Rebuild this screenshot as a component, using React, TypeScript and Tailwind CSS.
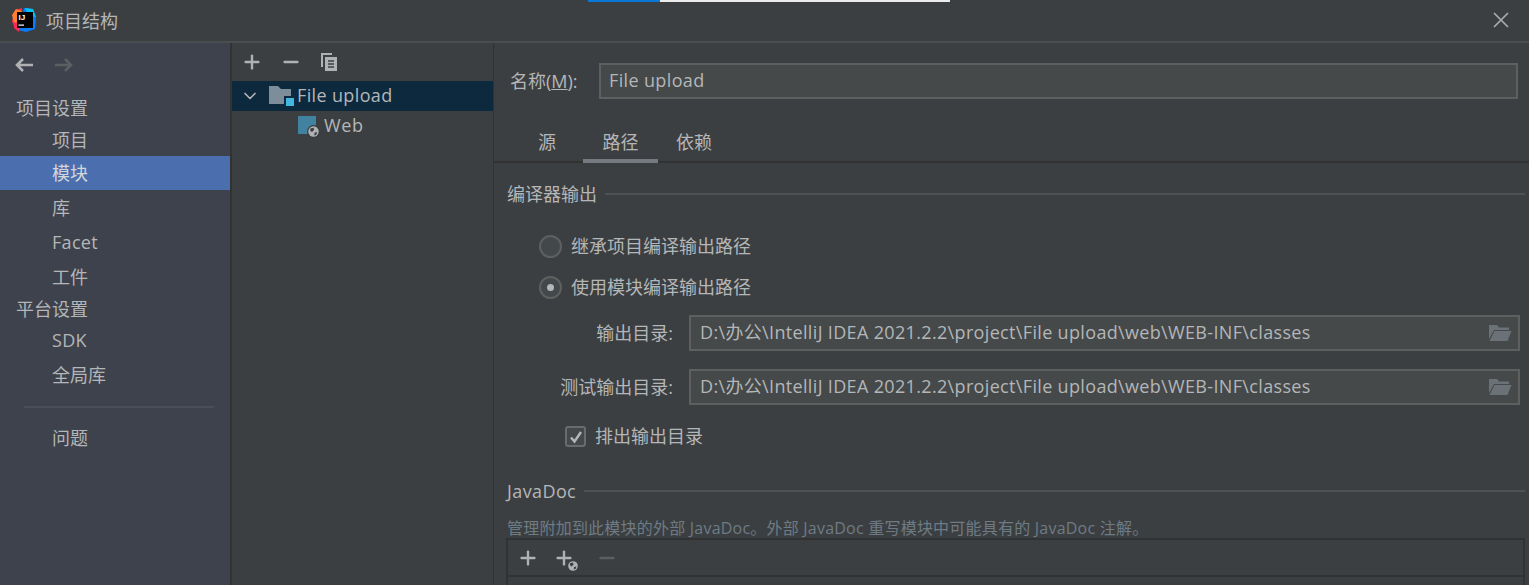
import React from 'react';
import { ChevronDown, Minus, Plus } from 'lucide-react';

const font = 'font-["Open_Sans","Noto_Sans_CJK_SC",sans-serif]';

const Globe = ({ className }: { className: string }) => (
  <svg viewBox="0 0 12 12" className={className}>
    <circle cx="6" cy="6" r="6" fill="#3c3f41" />
    <circle cx="6" cy="6" r="4.8" fill="#afb1b3" />
    <path d="M3 3.2 6 2.6 6.6 4.4 4.6 6.4 3 5.2ZM7 7 9.4 6.6 8.6 9 6.8 9.6Z" fill="#3c3f41" />
  </svg>
);

const FolderOpen = () => (
  <svg viewBox="0 0 24 18" className="h-[18px] w-6 shrink-0">
    <path d="M1 1h8l2 2.5h10V6H6L1 15Z" fill="#6b7277" />
    <path d="M6.5 7H23.5L19.5 17H1.5Z" fill="#6b7277" />
  </svg>
);

const Logo = () => (
  <svg viewBox="0 0 24 24" className="h-6 w-6 shrink-0">
    <path d="M3 2 10 0 9 9 3 21 0 13Z" fill="#fe2857" />
    <path d="M0 7 4 1 10 3 6 14 2 15Z" fill="#fe7f2d" />
    <path d="M12 0 21 1 24 10 23 21 14 24 6 22Z" fill="#087cfa" />
    <path d="M13 0 21 1 24 9 17 8Z" fill="#07c3f2" />
    <path d="M2 14 8 18 7 24 2 20Z" fill="#fe2857" />
    <rect x="5" y="4" width="16" height="16" fill="#000" />
    <text x="6.5" y="11.5" fontSize="8" fontWeight="700" fill="#fff" fontFamily="Liberation Sans">IJ</text>
    <rect x="6.5" y="16.5" width="5.5" height="1.2" fill="#fff" />
  </svg>
);

const NavArrow = ({ flip, color }: { flip?: boolean; color: string }) => (
  <svg viewBox="0 0 20 16" className={`h-4 w-5 ${flip ? '-scale-x-100' : ''}`}>
    <path d="M19 8H3M9 2 3 8l6 6" fill="none" stroke={color} strokeWidth="2.6" />
  </svg>
);

const SideRow = ({ label, h, indent, active, latin }: { label: string; h: string; indent?: boolean; active?: boolean; latin?: boolean }) => (
  <div className={`flex items-center text-[18px] ${h} ${indent ? 'pl-[52px]' : 'pl-[16px]'} ${active ? 'bg-[#4b6eaf] text-[#d4d6d8]' : 'text-[#b4b6b8]'} ${latin ? 'tracking-[0.3px]' : ''}`}>
    {label}
  </div>
);

const PathField = ({ label }: { label: string }) => (
  <div className="flex items-center">
    <div className="w-[178px] text-right text-[18px] text-[#b4b6b8]">{label}</div>
    <div className="ml-[16px] mr-[9px] flex h-[36px] flex-1 items-center justify-between border-2 border-[#5e6060] bg-[#45494a] pl-[9px] pr-[6px] text-[18px] text-[#b4b6b8]">
      <span className="-translate-y-px tracking-[0.34px]">D:\办公\IntelliJ IDEA 2021.2.2\project\File upload\web\WEB-INF\classes</span>
      <FolderOpen />
    </div>
  </div>
);

const Section = ({ title, latin }: { title: string; latin?: boolean }) => (
  <div className="flex items-center gap-[8px] pl-[13px] pr-[4px] text-[18px] text-[#b4b6b8]">
    <span className={latin ? 'tracking-[0.4px]' : ''}>{title}</span>
    <div className="h-[2px] flex-1 -translate-y-px bg-[#4f5254]" />
  </div>
);

export default function App() {
  return (
    <div className={`flex h-[585px] w-[1529px] flex-col overflow-hidden bg-[#3c3f41] ${font}`}>
      {/* title bar */}
      <div className="relative flex h-[43px] shrink-0 items-center border-b-2 border-[#4a4d4f] bg-[#3c3f41] pb-[1px] pl-[12px] pr-[20px]">
        <div className="absolute left-[588px] top-0 flex h-[2px]">
          <div className="w-[72px] bg-[#0a78d7]" />
          <div className="w-[290px] bg-[#ececec]" />
        </div>
        <Logo />
        <span className="ml-[10px] pt-[2px] text-[18px] text-[#b4b6b8]">项目结构</span>
        <svg viewBox="0 0 16 16" className="ml-auto h-4 w-4">
          <path d="M1 1 15 15M15 1 1 15" stroke="#a8aaac" strokeWidth="1.7" />
        </svg>
      </div>

      <div className="flex min-h-0 flex-1">
        {/* left nav */}
        <aside className="w-[232px] shrink-0 border-r-2 border-[#323232] bg-[#3e424c]">
          <div className="flex h-[48px] items-start gap-[20px] pl-[14px] pt-[14px]">
            <NavArrow color="#afb1b3" />
            <NavArrow flip color="#5c5f61" />
          </div>
          <SideRow label="项目设置" h="h-[34px]" />
          <SideRow label="项目" h="h-[31px]" indent />
          <SideRow label="模块" h="h-[34px]" indent active />
          <SideRow label="库" h="h-[36px]" indent />
          <SideRow label="Facet" h="h-[33px]" indent latin />
          <SideRow label="工件" h="h-[36px]" indent />
          <SideRow label="平台设置" h="h-[29px]" />
          <SideRow label="SDK" h="h-[32px]" indent latin />
          <SideRow label="全局库" h="h-[38px]" indent />
          <div className="ml-[24px] mr-[16px] mt-[12px] h-[2px] bg-[#4a4e57]" />
          <div className="mt-[13px]"><SideRow label="问题" h="h-[34px]" indent /></div>
        </aside>

        {/* module tree */}
        <div className="w-[262px] shrink-0 border-r border-[#323232] bg-[#3c3f41]">
          <div className="flex h-[38px] items-center gap-[17px] pl-[9px] text-[#afb1b3]">
            <Plus className="h-[22px] w-[22px]" strokeWidth={2.6} />
            <Minus className="h-[22px] w-[22px]" strokeWidth={2.6} />
            <svg viewBox="0 0 20 20" className="h-5 w-5">
              <path d="M2 1h11v2H4v12H2Z" fill="#afb1b3" />
              <path d="M6 5h12v14H6Z" fill="#afb1b3" />
              <path d="M9 9h6M9 12h6M9 15h6" stroke="#3c3f41" strokeWidth="1.4" />
            </svg>
          </div>
          <div className="flex h-[30px] items-center bg-[#0d293e] pl-[8px] text-[18px] text-[#b4b6b8]">
            <ChevronDown className="h-[20px] w-[20px]" strokeWidth={2} />
            <div className="relative ml-[9px] h-[20px] w-[24px]">
              <svg viewBox="0 0 22 18" className="h-[18px] w-[22px]">
                <path d="M0 0h9l3 3h10v15H0Z" fill="#7d8d99" />
              </svg>
              <div className="absolute bottom-0 right-[-1px] h-[10px] w-[10px] border-l-2 border-t-2 border-[#0d293e] bg-[#40b6e0]" />
            </div>
            <span className="ml-[4px] -translate-y-px tracking-[0.36px]">File upload</span>
          </div>
          <div className="flex h-[30px] items-center pl-[66px] text-[18px] text-[#b4b6b8]">
            <div className="relative h-[20px] w-[20px]">
              <div className="h-[18px] w-[18px] bg-[#40829f]" />
              <Globe className="absolute -bottom-[2px] -right-[2px] h-[13px] w-[13px]" />
            </div>
            <span className="ml-[6px] -translate-y-px tracking-[0.6px]">Web</span>
          </div>
        </div>

        {/* settings */}
        <main className="flex min-w-0 flex-1 flex-col">
          <div className="flex items-center pl-[16px] pr-[11px] pt-[20px]">
            <span className="w-[89px] text-[18px] text-[#b4b6b8]">名称(<span className="underline">M</span>):</span>
            <div className="flex h-[36px] flex-1 items-center border-2 border-[#5e6060] bg-[#45494a] pb-[2px] pl-[8px] text-[18px] tracking-[0.36px] text-[#b4b6b8]">File upload</div>
          </div>
          <div className="mt-[17px] flex h-[47px] items-end border-b-2 border-[#323232] pl-[44px] text-[18px] text-[#b4b6b8]">
            <div className="h-[32px]">源</div>
            <div className="-mb-[2px] ml-[27px] h-[34px] w-[75px] border-b-[4px] border-[#747a80] text-center">路径</div>
            <div className="ml-[18px] h-[32px]">依赖</div>
          </div>
          <div className="mt-[18px]"><Section title="编译器输出" /></div>
          <div className="ml-[45px] mt-[25px] flex items-center gap-[9px] text-[18px] text-[#b4b6b8]">
            <div className="h-[23px] w-[23px] rounded-full border-2 border-[#5e6060] bg-[#43494a]" />
            <span>继承项目编译输出路径</span>
          </div>
          <div className="ml-[45px] mt-[14px] flex items-center gap-[9px] text-[18px] text-[#b4b6b8]">
            <div className="flex h-[23px] w-[23px] items-center justify-center rounded-full border-2 border-[#5e6060] bg-[#43494a]">
              <div className="h-[7px] w-[7px] rounded-full bg-[#b4b6b8]" />
            </div>
            <span>使用模块编译输出路径</span>
          </div>
          <div className="mt-[14px] flex flex-col gap-[18px] pl-[1px]">
            <PathField label="输出目录:" />
            <PathField label="测试输出目录:" />
          </div>
          <div className="ml-[71px] mt-[18px] flex items-center gap-[9px] text-[18px] text-[#b4b6b8]">
            <div className="flex h-[21px] w-[21px] items-center justify-center rounded-[3px] border-2 border-[#6b6b6b] bg-[#43494a]">
              <svg viewBox="0 0 14 14" className="h-[14px] w-[14px]">
                <path d="M2 7.5 5.5 11.5 12 2" fill="none" stroke="#b4b6b8" strokeWidth="2.4" />
              </svg>
            </div>
            <span>排出输出目录</span>
          </div>
          <div className="mt-[28px]"><Section title="JavaDoc" latin /></div>
          <div className="ml-[13px] mt-[13px] text-[16px] leading-[20px] tracking-[0.22px] text-[#6e7b85]">管理附加到此模块的外部 JavaDoc。外部 JavaDoc 重写模块中可能具有的 JavaDoc 注解。</div>
          <div className="ml-[12px] mr-[4px] flex-1 border-l-2 border-r-2 border-t-2 border-[#323232]">
            <div className="flex h-[37px] items-center gap-[14px] border-b-2 border-[#323232] pl-[9px] text-[#afb1b3]">
              <Plus className="h-[22px] w-[22px]" strokeWidth={2.6} />
              <div className="relative h-[22px] w-[22px]">
                <Plus className="h-[22px] w-[22px]" strokeWidth={2.6} />
                <Globe className="absolute -bottom-[3px] -right-[4px] h-[12px] w-[12px]" />
              </div>
              <Minus className="ml-[7px] h-[22px] w-[22px] text-[#5c5f61]" strokeWidth={2.6} />
            </div>
          </div>
        </main>
      </div>
    </div>
  );
}
